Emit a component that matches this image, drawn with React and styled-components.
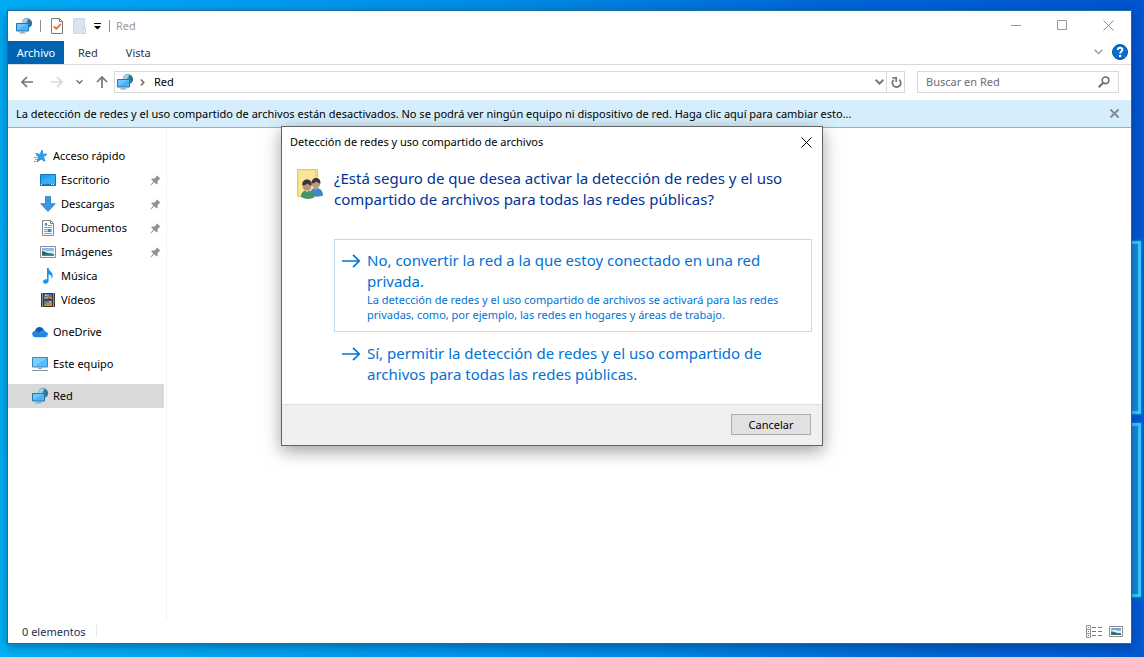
import React from "react";
import styled, { createGlobalStyle, css } from "styled-components";

const GlobalStyle = createGlobalStyle`
  *, *::before, *::after { box-sizing: border-box; }
  body {
    margin: 0;
    font-family: "Noto Sans", "Open Sans", sans-serif;
    font-size: 11px;
    line-height: 16px;
    color: #000;
  }
  button, input { font: inherit; color: inherit; }
  svg { display: block; flex: none; }
`;

/* Desktop */
const Desktop = styled.div`
  position: relative;
  display: flex;
  min-height: 100vh;
  padding: 10px 12px 13px 7px;
  overflow: hidden;
  background: linear-gradient(80deg, #00b2f8 0%, #00a0f0 25%, #008ae4 50%, #0066d6 75%, #0054d0 100%);
`;

const Pane = styled.div`
  position: absolute;
  right: 3px;
  top: ${(p) => p.$top}px;
  width: 60px;
  height: ${(p) => p.$height}px;
  border: 3px solid #30d0f8;
  background: #1888e0;
  box-shadow: 0 0 3px #1aa0f0;
`;

/* Explorer window */
const Window = styled.main`
  position: relative;
  flex: 1;
  display: flex;
  flex-direction: column;
  min-width: 0;
  background: #fff;
  border: 1px solid #1c6ca4;
  box-shadow: 0 3px 10px rgba(0, 20, 60, 0.4);
`;

const TitleBar = styled.header`
  display: flex;
  align-items: center;
  height: 30px;
  padding-left: 8px;
`;

const PlainButton = styled.button`
  display: flex;
  align-items: center;
  justify-content: center;
  padding: 0;
  border: 0;
  background: none;
`;

const QuickTools = styled.div`
  display: flex;
  align-items: center;
  gap: 8px;
`;

const Divider = styled.span`
  width: 1px;
  height: 12px;
  margin-right: 2px;
  background: #8c8c8c;
`;

const WindowTitle = styled.h1`
  flex: 1;
  margin: 0 0 0 4px;
  font-size: 11px;
  font-weight: 400;
  color: #999;
`;

const CaptionButton = styled(PlainButton)`
  width: 46px;
  height: 28px;
  margin-bottom: 2px;
`;

const Ribbon = styled.nav`
  display: flex;
  align-items: stretch;
  height: 24px;
  border-bottom: 1px solid #dadbdc;
`;

const RibbonTab = styled.button`
  padding: 1px ${(p) => (p.$primary ? 0 : 14)}px 0;
  min-width: ${(p) => (p.$primary ? 56 : 0)}px;
  border: 0;
  color: ${(p) => (p.$primary ? "#fff" : "#333")};
  background: ${(p) => (p.$primary ? "#0063b1" : "none")};
`;

const RibbonEnd = styled.div`
  display: flex;
  align-items: center;
  gap: 9px;
  margin-left: auto;
  padding: 0 3px 1px 0;
`;

const AddressRow = styled.div`
  display: flex;
  align-items: flex-start;
  height: 35px;
  padding: 6px 12px 0 13px;
`;

const NavButtons = styled.div`
  display: flex;
  align-items: center;
  gap: 13px;
  height: 22px;
`;

const HistoryButtons = styled.div`
  display: flex;
  gap: 18px;
`;

const Field = styled.div`
  display: flex;
  align-items: center;
  height: 22px;
  border: 1px solid #d9d9d9;
`;

const AddressField = styled(Field)`
  flex: 1;
  margin: 0 12px 0 6px;
  padding-left: 2px;
`;

const Crumb = styled.span`
  flex: 1;
  display: flex;
  align-items: center;
  gap: 9px;
  margin-left: 7px;
`;

const RefreshButton = styled(PlainButton)`
  width: 18px;
  height: 20px;
  margin-left: 2px;
  padding-left: 2px;
  border-left: 1px solid #d9d9d9;
`;

const SearchField = styled(Field)`
  width: 202px;
  padding: 0 8px;
`;

const SearchInput = styled.input`
  flex: 1;
  min-width: 0;
  padding: 0;
  border: 0;
  outline: 0;
  background: none;
  &::placeholder { color: #6d6d6d; opacity: 1; }
`;

const InfoBar = styled.div`
  display: flex;
  align-items: center;
  height: 28px;
  padding: 0 12px 0 8px;
  background: #d6eefb;
  border-bottom: 1px solid #a5adb2;
`;

const InfoText = styled.button`
  flex: 1;
  padding: 0;
  border: 0;
  background: none;
  text-align: left;
  white-space: nowrap;
`;

const Body = styled.div`
  flex: 1;
  display: flex;
`;

const Sidebar = styled.nav`
  width: 159px;
  padding: 16px 2px 0 0;
  border-right: 1px solid #f2f2f2;
`;

const Group = styled.ul`
  margin: 0 0 8px;
  padding: 0;
  list-style: none;
`;

const Entry = styled.a`
  display: flex;
  align-items: center;
  gap: 5px;
  height: 24px;
  padding: 0 3px 0 ${(p) => (p.$nested ? 32 : 24)}px;
  color: #000;
  text-decoration: none;
  ${(p) => p.$selected && css`background: #d9d9d9;`}
`;

const EntryLabel = styled.span`
  flex: 1;
`;

const StatusBar = styled.footer`
  display: flex;
  align-items: center;
  height: 24px;
  padding: 0 8px 0 14px;
`;

const StatusText = styled.span`
  padding: 2px 10px 0 0;
  color: #1e3250;
`;

const StatusRule = styled.span`
  width: 1px;
  height: 12px;
  background: #e8e8e8;
`;

const ViewButtons = styled.div`
  display: flex;
  gap: 7px;
  margin-left: auto;
`;

/* Confirmation dialog */
const Dialog = styled.section`
  position: absolute;
  top: 115px;
  left: 273px;
  width: 542px;
  background: #fff;
  border: 1px solid #626466;
  box-shadow: 0 5px 16px rgba(0, 0, 0, 0.38);
`;

const DialogTitle = styled.header`
  display: flex;
  align-items: center;
  justify-content: space-between;
  height: 30px;
  padding: 0 10px 0 8px;
`;

const DialogBody = styled.div`
  display: flex;
  gap: 11px;
  padding: 11px 10px 10px 15px;
`;

const DialogMain = styled.div`
  flex: 1;
`;

const Question = styled.h2`
  margin: 0 0 29px;
  font-size: 15px;
  line-height: 21px;
  font-weight: 400;
  color: #003399;
`;

const Choice = styled.button`
  display: flex;
  align-items: flex-start;
  gap: 6px;
  width: 100%;
  padding: 10px 12px 8px 7px;
  border: 1px solid ${(p) => (p.$focused ? "#bcdcf4" : "transparent")};
  background: none;
  color: #0072d6;
  text-align: left;
`;

const ChoiceTitle = styled.span`
  display: block;
  font-size: 15px;
  line-height: 21px;
`;

const ChoiceNote = styled.span`
  display: block;
  padding-bottom: 1px;
  line-height: 15px;
`;

const DialogFooter = styled.footer`
  display: flex;
  justify-content: flex-end;
  padding: 9px 11px 10px;
  border-top: 1px solid #dfdfdf;
  background: #f0f0f0;
`;

const CancelButton = styled.button`
  width: 80px;
  height: 21px;
  padding: 0;
  border: 1px solid #adadad;
  background: #e1e1e1;
`;

/* Icons */
const NetworkIcon = () => (
  <svg width="16" height="16" viewBox="0 0 16 16">
    <circle cx="10.900" cy="5.200" r="5.100" fill="#4f93b5" />
    <path d="M6 4.500C6.500 1.500 9.500 0 12 .500 12.100 2.500 10.500 3 10 5H6Z" fill="#a9cfe0" />
    <path d="M12.500 1.500c2.500.5 3.800 2.300 3.400 4.500-.3 1.500-1.400 3-2.400 3.500V6c-1.500-1-2-3-1-4.500Z" fill="#2f7193" />
    <path d="M.5 5.500h12v7.500H.5Z" fill="#4ab4f6" stroke="#2575ac" />
    <path d="M1 6h10L1 12Z" fill="#8ad5ff" opacity=".55" />
    <path d="M5 13.500h3v1H5ZM3 14.500h7v1H3Z" fill="#8cabc0" />
  </svg>
);

const PropertiesIcon = () => (
  <svg width="14" height="16" viewBox="0 0 14 16">
    <path d="M.5.500h8l3 3v12H.5Z" fill="#fff" stroke="#7c7c7c" />
    <path d="M8.500.500v3h3" fill="none" stroke="#7c7c7c" />
    <path d="m2.800 8.300 2.500 2.500L9.800 6" fill="none" stroke="#e8632f" strokeWidth="1.800" />
  </svg>
);

const NewFolderIcon = () => (
  <svg width="13" height="16" viewBox="0 0 13 16">
    <path d="M.5.500h11v15H.5Z" fill="#dbe3f3" stroke="#cdd8eb" />
    <path d="M10 9.500h2.500v6h-2.500Z" fill="#e6eefa" stroke="#c3d2e9" />
  </svg>
);

const CustomizeIcon = () => (
  <svg width="7" height="8" viewBox="0 0 7 8">
    <path d="M0 1h7v1H0ZM0 4h7L3.500 7.500Z" fill="#000" />
  </svg>
);

const MinimizeIcon = () => (
  <svg width="10" height="10" viewBox="0 0 10 10">
    <path d="M0 5.500h10" stroke="#999" />
  </svg>
);

const MaximizeIcon = () => (
  <svg width="10" height="10" viewBox="0 0 10 10">
    <path d="M.5.500h9v9h-9Z" fill="none" stroke="#999" />
  </svg>
);

const CrossIcon = ({ color, size = 11, weight = 1 }) => (
  <svg width={size} height={size} viewBox="0 0 11 11">
    <path d="m.5.500 10 10m0-10-10 10" stroke={color} strokeWidth={weight} />
  </svg>
);

const Chevron = ({ width = 9, color = "#777", weight = 1.5 }) => (
  <svg width={width} height="6" viewBox="0 0 9 6">
    <path d="m.7.800 3.800 3.800L8.300.800" fill="none" stroke={color} strokeWidth={weight} />
  </svg>
);

const HelpIcon = () => (
  <svg width="16" height="16" viewBox="0 0 16 16">
    <circle cx="8" cy="8" r="7.500" fill="#0a6fd0" stroke="#085096" />
    <path d="M5.800 6c0-3 4.600-3 4.600-.4C10.400 7.400 8.100 7.400 8.100 9.600" fill="none" stroke="#fff" strokeWidth="1.900" />
    <path d="M7 10.900h2.200V13H7Z" fill="#fff" />
  </svg>
);

const ArrowIcon = ({ turn = 0, color = "#757575" }) => (
  <svg width="12" height="12" viewBox="0 0 12 12">
    <path d="M12 6H1M6 1 1 6l5 5" fill="none" stroke={color} strokeWidth="1.700" transform={`rotate(${turn} 6 6)`} />
  </svg>
);

const CrumbArrow = () => (
  <svg width="5" height="7" viewBox="0 0 5 7">
    <path d="m.8.500 3 3-3 3" fill="none" stroke="#6b6b6b" strokeWidth="1.500" />
  </svg>
);

const RefreshIcon = () => (
  <svg width="11" height="13" viewBox="0 0 11 13">
    <path d="M8.200 3.600A4.200 4.200 0 1 1 2.600 3.900" fill="none" stroke="#757575" strokeWidth="1.700" />
    <path d="M1.500 1.800h3.700v4.200" fill="none" stroke="#757575" strokeWidth="1.700" />
  </svg>
);

const SearchIcon = () => (
  <svg width="12" height="12" viewBox="0 0 12 12">
    <circle cx="7.500" cy="4.300" r="3.300" fill="none" stroke="#6f6f6f" strokeWidth="1.600" />
    <path d="M5.200 6.800.8 11.200" stroke="#6f6f6f" strokeWidth="2" />
  </svg>
);

const StarIcon = () => (
  <svg width="16" height="16" viewBox="0 0 16 16">
    <path d="m10 2 .8 4.200h4.200l-3.400 2.500 1.200 4.600-3.700-2.300L5 14l1.500-5L4.500 6.300h3.800Z" fill="#2f9def" stroke="#1b83d2" strokeWidth=".8" />
    <path d="M3 5.500h3M4 7.500h2M1.500 9.500h4M3 11.500h2M2 13.500h2" stroke="#5fb5ef" />
  </svg>
);

const DesktopIcon = () => (
  <svg width="16" height="16" viewBox="0 0 16 16">
    <path d="M.5 2.500h15v11H.5Z" fill="#1fa1f5" stroke="#1273b8" />
    <path d="M1 9 13 3h2v9H1Z" fill="#46b8fb" opacity=".6" />
    <path d="M1 12.500h14" stroke="#1d78b9" />
    <path d="M1 12.500h1M11 12.500h1M13 12.500h1" stroke="#fff" />
  </svg>
);

const DownloadIcon = () => (
  <svg width="16" height="16" viewBox="0 0 16 16">
    <path d="M5.500.500h5v7.200h4.700L8 15.500.8 7.700h4.700Z" fill="#3b97e4" stroke="#2878c6" strokeWidth=".8" />
  </svg>
);

const DocumentIcon = () => (
  <svg width="16" height="16" viewBox="0 0 16 16">
    <path d="M2.500.500h8l3 3v12h-11Z" fill="#fff" stroke="#858585" />
    <path d="M10.500.500v3h3" fill="none" stroke="#858585" />
    <path d="M5 5.500h2M8 5.500h4M4 7.500h8M4 9.500h3M4 11.500h3M4 13.500h8" stroke="#6ba3cc" />
    <path d="M7.500 9h4v3h-4Z" fill="#3b8acb" />
    <path d="m5 5 1-2 1 2" fill="none" stroke="#1979ca" />
  </svg>
);

const PictureIcon = () => (
  <svg width="16" height="16" viewBox="0 0 16 16">
    <path d="M.5 2.500h15v11H.5Z" fill="#fff" stroke="#8c8c8c" />
    <path d="M2 4h12v8H2Z" fill="#82bef0" />
    <path d="M2 6.500c3-1 5 1 12 .5V10H2Z" fill="#d7e9f4" />
    <path d="M2 7c3 .5 4 2 8 2.300l4 .7v1H2Z" fill="#2f5f4e" />
    <path d="M2 10.500h12V12H2Z" fill="#4a82b4" />
  </svg>
);

const MusicIcon = () => (
  <svg width="16" height="16" viewBox="0 0 16 16">
    <path d="M7 0h1.600c.2 3.200 4.600 4 4 8.500-.2 1-.7 2-1.200 2.500.7-3-1-4.300-2.800-4.700V13c0 3.200-5.600 3.800-5.600.8 0-2.200 2.300-3 4-2.400Z" fill="#1596f2" />
  </svg>
);

const VideoIcon = () => (
  <svg width="16" height="16" viewBox="0 0 16 16">
    <path d="M1 1h14v14H1Z" fill="#383838" />
    <path d="M2.500 1.500v14M13.500 1.500v14" stroke="#e4e4e4" strokeDasharray="1 1" />
    <path d="M4 2h8v5H4ZM4 8.500h8V14H4Z" fill="#3874c8" />
    <path d="M4 5h3V3h2v2h3v2H4ZM4 13l3-3 2 1 3-1v4H4Z" fill="#c88d29" />
    <path d="M5 2.500h2V4H5ZM9 9h2v1.500H9Z" fill="#f2ca35" />
    <path d="M8 5.500h2V7H8Z" fill="#c23c33" />
  </svg>
);

const CloudIcon = () => (
  <svg width="16" height="16" viewBox="0 0 16 16">
    <path d="M3 7C4 2 10 1.500 12 6l-6 4-5.500.5C0 8.500 1 7.300 3 7Z" fill="#0a5fb8" />
    <path d="M8 8c2-2.800 5-2 5.500-.3 2 .2 2.800 2 2.400 3.500L12 12Z" fill="#1990e5" />
    <path d="M.5 11C.2 8.500 2.500 6.800 5 7.300l10.500 4.500c-.5 1-1.500 1.400-2.500 1.400H3.500C2 13.200.8 12.500.5 11Z" fill="#2186dc" />
  </svg>
);

const ComputerIcon = () => (
  <svg width="16" height="16" viewBox="0 0 16 16">
    <path d="M.5 1.500h15v9.500H.5Z" fill="#55bdfb" stroke="#4383ac" />
    <path d="M1 2h13L3 10.500H1Z" fill="#96daff" opacity=".6" />
    <path d="M6 11.500h4V13H6Z" fill="#91abc0" />
    <path d="M0 14.500h16" stroke="#8297ab" />
  </svg>
);

const PinIcon = () => (
  <svg width="11" height="11" viewBox="0 0 11 11">
    <path d="m6.800.300 3.700 3.500-1.300.5-1.700 1.900.1 2.500-1.100.9-2.200-2.400L.8 10.600l-.5-.4 3.100-3.800L1.200 4.500l1-1 2.400.1L6.500 1.600Z" fill="#88949d" />
  </svg>
);

const DetailsViewIcon = () => (
  <svg width="16" height="13" viewBox="0 0 16 13">
    <path d="M.5.500h4v12h-4ZM.5 4.500h4M.5 8.500h4" fill="none" stroke="#959595" />
    <path d="M6 2.500h4M12 2.500h4M6 6.500h4M12 6.500h4M6 10.500h4M12 10.500h4" stroke="#7b7b7b" />
    <path d="M2 2h1v1H2Z" fill="#3aa04c" />
    <path d="M2 6h1v1H2Z" fill="#2e8fe0" />
    <path d="M2 10h1v1H2Z" fill="#e02020" />
  </svg>
);

const LargeViewIcon = () => (
  <svg width="14" height="11" viewBox="0 0 14 11">
    <path d="M.5.500h13v10H.5Z" fill="#fff" stroke="#8d8d8d" />
    <path d="M2 2h10v7H2Z" fill="#6ca9e4" />
    <path d="M2 4.500c4-1.500 6 1 10 0V7H2Z" fill="#dcebf6" />
    <path d="M2 5.500c3 0 5 1.500 10 2V9H2Z" fill="#386a70" />
  </svg>
);

const SharingIcon = () => (
  <svg width="26" height="32" viewBox="0 0 26 32">
    <path d="M.5 1.500h20v27H.5Z" fill="#fbdc7d" stroke="#edc951" />
    <path d="M2 3h16v24H2Z" fill="#fde49a" />
    <path d="M18.500 2v26" stroke="#f0cf62" />
    <path d="M13 27c0-4 2-7 6-7s7 2.500 7 7.500c-3 1.500-8 1.500-13-.5Z" fill="#4287c8" />
    <circle cx="19" cy="16" r="4.200" fill="#c29a7c" />
    <path d="M14.500 15.500c-.5-7 9.500-7.500 9 0-2-.3-3-1-4-2-1.500 1.300-3 2-5 2Z" fill="#35373a" />
    <path d="M4 29c0-4 2-6.500 6-6.500s7 2 7 7c-3 2-9 2-13-.5Z" fill="#45926c" />
    <circle cx="10" cy="18.500" r="4.300" fill="#b99478" />
    <path d="M5.300 17.500c-.8-7.800 10.200-8 9.400 0-2-.2-3.200-1-4.200-2-1.500 1.300-3.200 2-5.200 2Z" fill="#35373a" />
    <path d="m8.500 22.500 1.500 2 1.500-2M18 20.500l1 1.500 1-1.500" fill="#e8d5c3" />
  </svg>
);

const ChoiceArrow = () => (
  <svg width="19" height="22" viewBox="0 0 19 22">
    <path d="M0 11h17.500M11 4.800l6.300 6.200-6.300 6.200" fill="none" stroke="#0078d7" strokeWidth="1.700" />
  </svg>
);

const quickAccess = [
  { label: "Escritorio", Icon: DesktopIcon, pinned: true },
  { label: "Descargas", Icon: DownloadIcon, pinned: true },
  { label: "Documentos", Icon: DocumentIcon, pinned: true },
  { label: "Imágenes", Icon: PictureIcon, pinned: true },
  { label: "Música", Icon: MusicIcon },
  { label: "Vídeos", Icon: VideoIcon },
];

const places = [
  { label: "OneDrive", Icon: CloudIcon },
  { label: "Este equipo", Icon: ComputerIcon },
  { label: "Red", Icon: NetworkIcon, selected: true },
];

const NavEntry = ({ label, Icon, pinned, nested, selected }) => (
  <li>
    <Entry href="#" $nested={nested} $selected={selected}>
      <Icon />
      <EntryLabel>{label}</EntryLabel>
      {pinned && <PinIcon />}
    </Entry>
  </li>
);

export default function App() {
  return (
    <>
      <GlobalStyle />
      <Desktop>
        <Pane $top={241} $height={173} />
        <Pane $top={423} $height={174} />
        <Window>
          <TitleBar>
            <QuickTools>
              <NetworkIcon />
              <Divider />
              <PlainButton aria-label="Propiedades"><PropertiesIcon /></PlainButton>
              <PlainButton aria-label="Nueva carpeta"><NewFolderIcon /></PlainButton>
              <PlainButton aria-label="Personalizar"><CustomizeIcon /></PlainButton>
              <Divider />
            </QuickTools>
            <WindowTitle>Red</WindowTitle>
            <CaptionButton aria-label="Minimizar"><MinimizeIcon /></CaptionButton>
            <CaptionButton aria-label="Maximizar"><MaximizeIcon /></CaptionButton>
            <CaptionButton aria-label="Cerrar"><CrossIcon color="#8c8c8c" /></CaptionButton>
          </TitleBar>

          <Ribbon>
            <RibbonTab $primary>Archivo</RibbonTab>
            <RibbonTab>Red</RibbonTab>
            <RibbonTab>Vista</RibbonTab>
            <RibbonEnd>
              <PlainButton aria-label="Expandir"><Chevron color="#999" weight={1.3} /></PlainButton>
              <PlainButton aria-label="Ayuda"><HelpIcon /></PlainButton>
            </RibbonEnd>
          </Ribbon>

          <AddressRow>
            <NavButtons>
              <HistoryButtons>
                <PlainButton aria-label="Atrás"><ArrowIcon /></PlainButton>
                <PlainButton aria-label="Adelante"><ArrowIcon turn={180} color="#d5d5d5" /></PlainButton>
              </HistoryButtons>
              <PlainButton aria-label="Recientes"><Chevron width={7} weight={2} /></PlainButton>
              <PlainButton aria-label="Arriba"><ArrowIcon turn={90} /></PlainButton>
            </NavButtons>
            <AddressField>
              <NetworkIcon />
              <Crumb>
                <CrumbArrow />
                Red
              </Crumb>
              <PlainButton aria-label="Historial"><Chevron weight={2} /></PlainButton>
              <RefreshButton aria-label="Actualizar"><RefreshIcon /></RefreshButton>
            </AddressField>
            <SearchField>
              <SearchInput aria-label="Buscar en Red" placeholder="Buscar en Red" />
              <SearchIcon />
            </SearchField>
          </AddressRow>

          <InfoBar>
            <InfoText>
              La detección de redes y el uso compartido de archivos están desactivados. No se podrá ver ningún equipo ni dispositivo de red. Haga clic aquí para cambiar esto...
            </InfoText>
            <PlainButton aria-label="Cerrar aviso"><CrossIcon color="#858b90" size={9} weight={2.4} /></PlainButton>
          </InfoBar>

          <Body>
            <Sidebar>
              <Group>
                <NavEntry label="Acceso rápido" Icon={StarIcon} />
                {quickAccess.map((item) => (
                  <NavEntry key={item.label} nested {...item} />
                ))}
              </Group>
              {places.map((item) => (
                <Group key={item.label}>
                  <NavEntry {...item} />
                </Group>
              ))}
            </Sidebar>
          </Body>

          <StatusBar>
            <StatusText>0 elementos</StatusText>
            <StatusRule />
            <ViewButtons>
              <PlainButton aria-label="Detalles"><DetailsViewIcon /></PlainButton>
              <PlainButton aria-label="Iconos grandes"><LargeViewIcon /></PlainButton>
            </ViewButtons>
          </StatusBar>

          <Dialog role="dialog" aria-labelledby="dialog-title">
            <DialogTitle>
              <span id="dialog-title">Detección de redes y uso compartido de archivos</span>
              <PlainButton aria-label="Cerrar"><CrossIcon color="#000" /></PlainButton>
            </DialogTitle>
            <DialogBody>
              <SharingIcon />
              <DialogMain>
                <Question>
                  ¿Está seguro de que desea activar la detección de redes y el uso
                  <br />
                  compartido de archivos para todas las redes públicas?
                </Question>
                <Choice $focused>
                  <ChoiceArrow />
                  <span>
                    <ChoiceTitle>
                      No, convertir la red a la que estoy conectado en una red
                      <br />
                      privada.
                    </ChoiceTitle>
                    <ChoiceNote>
                      La detección de redes y el uso compartido de archivos se activará para las redes
                      <br />
                      privadas, como, por ejemplo, las redes en hogares y áreas de trabajo.
                    </ChoiceNote>
                  </span>
                </Choice>
                <Choice>
                  <ChoiceArrow />
                  <ChoiceTitle>
                    Sí, permitir la detección de redes y el uso compartido de
                    <br />
                    archivos para todas las redes públicas.
                  </ChoiceTitle>
                </Choice>
              </DialogMain>
            </DialogBody>
            <DialogFooter>
              <CancelButton>Cancelar</CancelButton>
            </DialogFooter>
          </Dialog>
        </Window>
      </Desktop>
    </>
  );
}
